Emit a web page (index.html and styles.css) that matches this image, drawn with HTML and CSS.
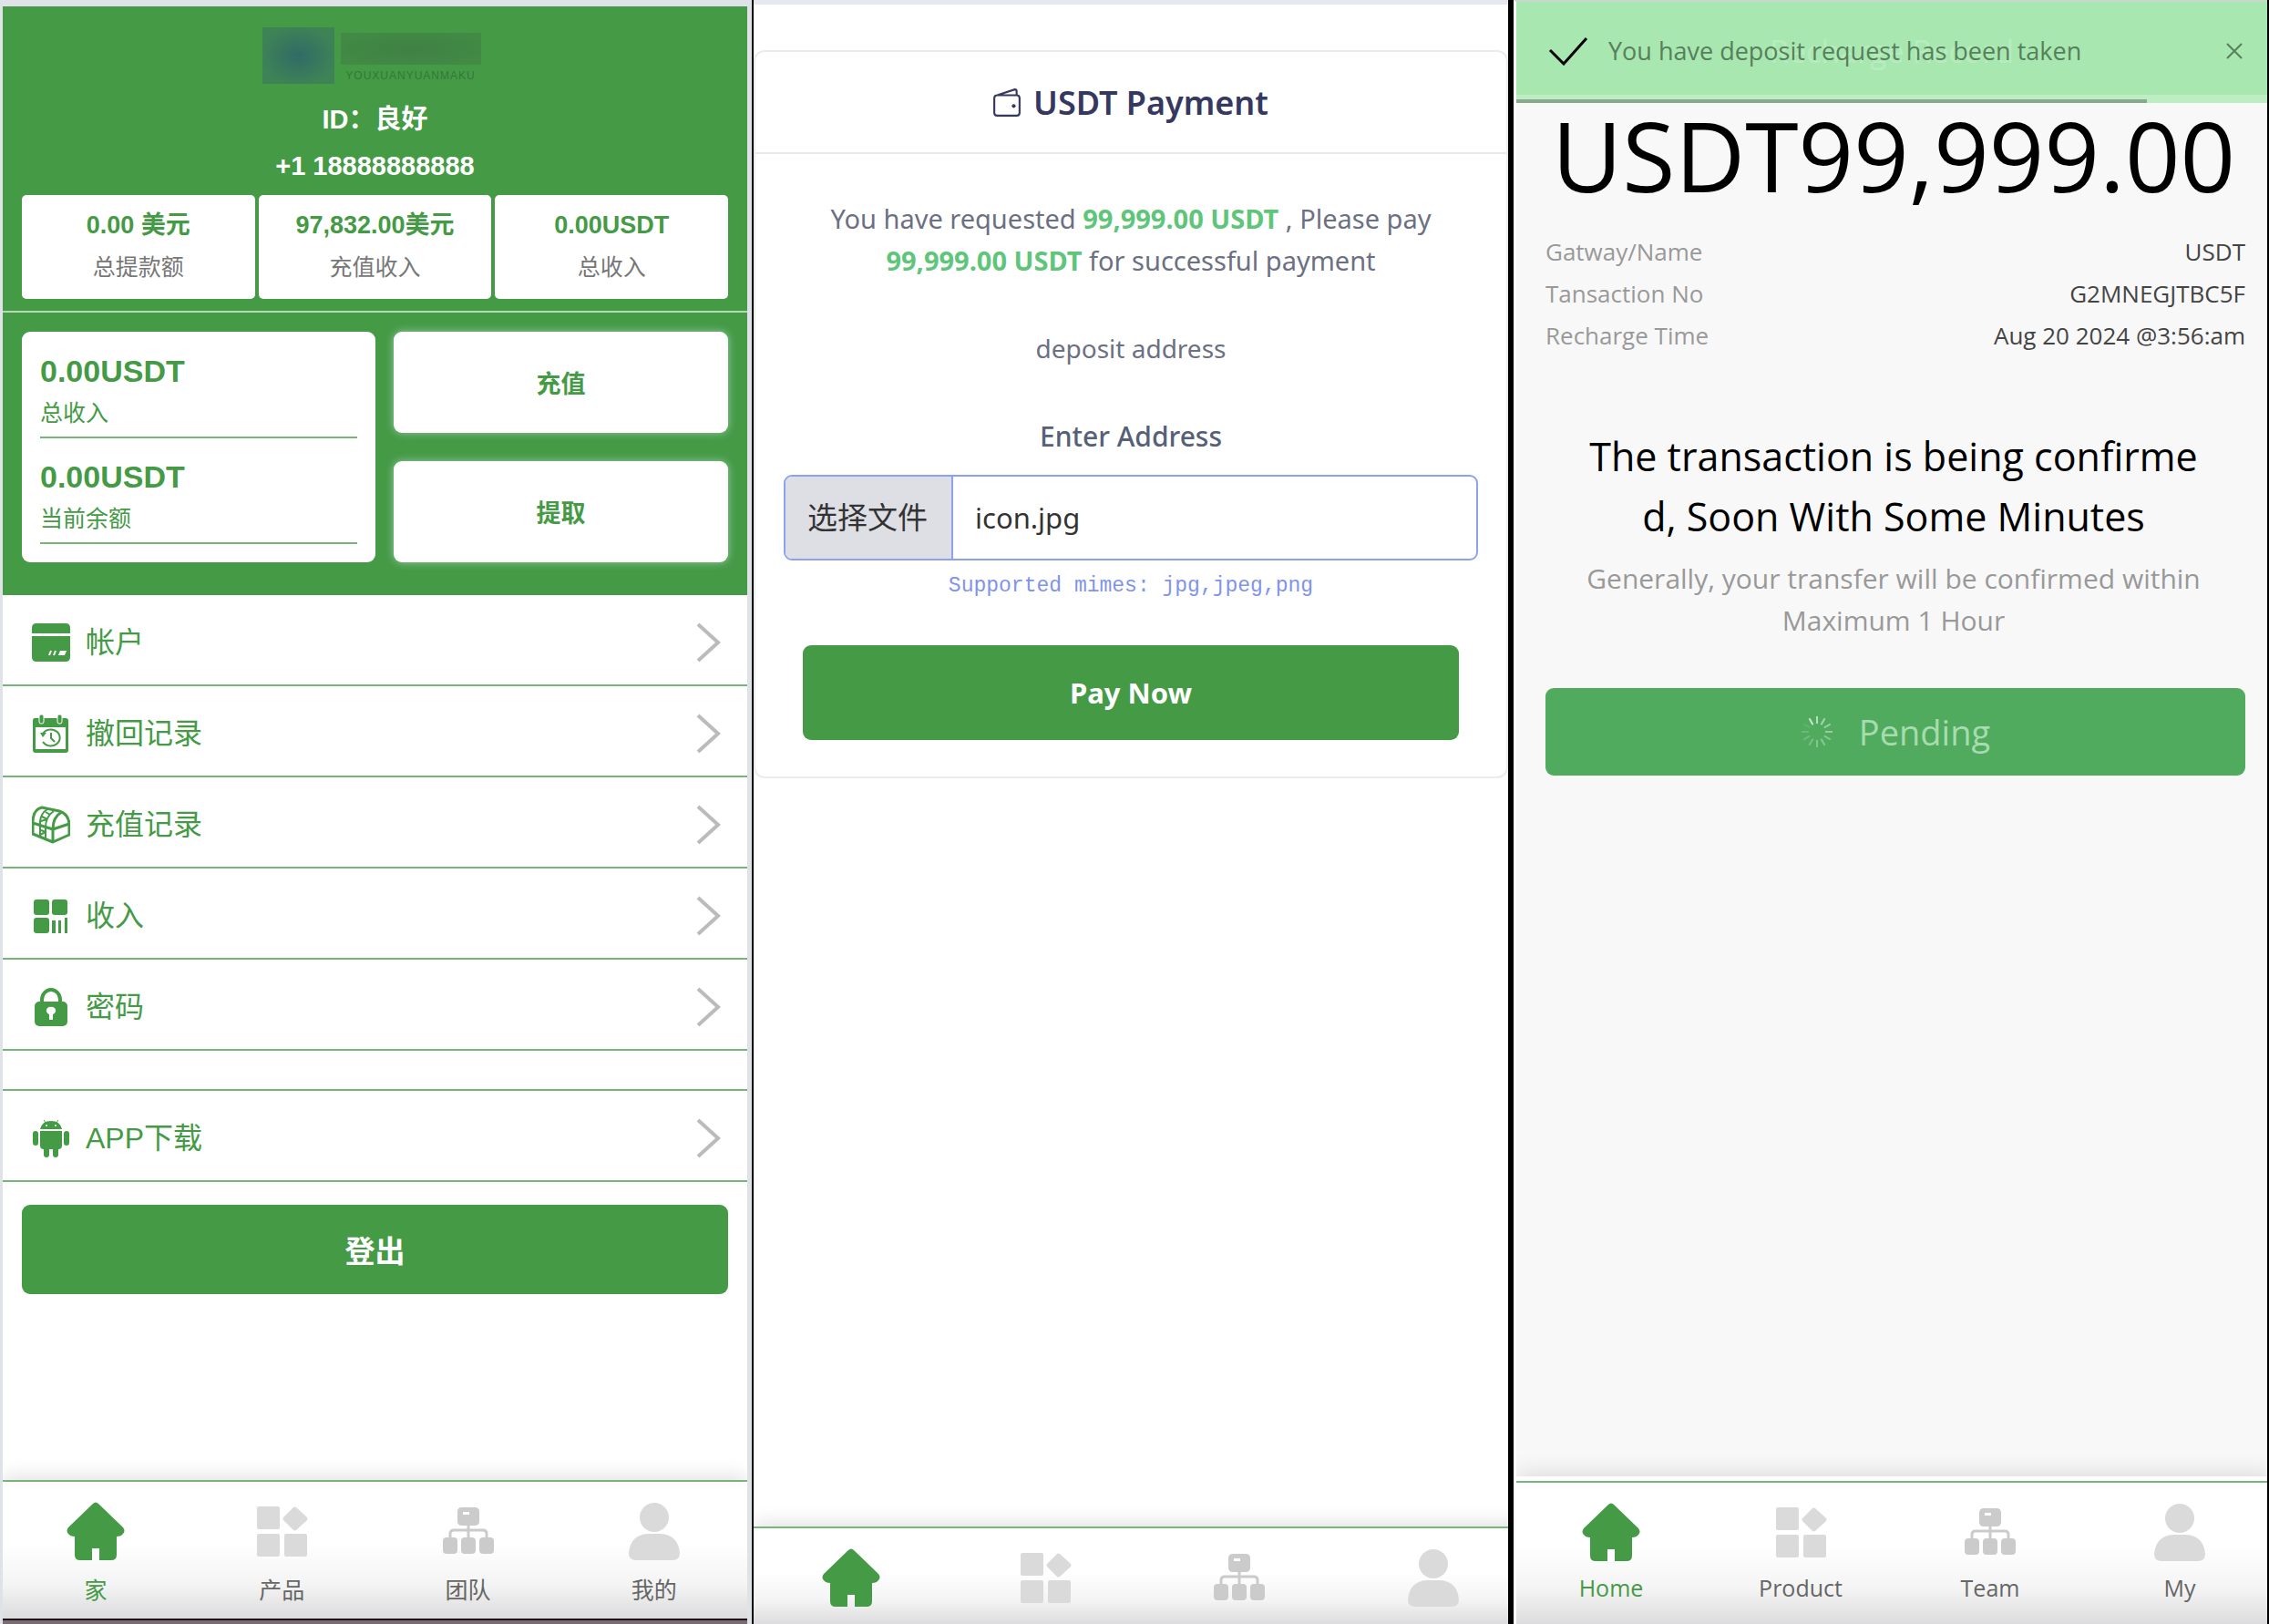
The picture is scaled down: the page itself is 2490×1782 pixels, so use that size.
FILE: index.html
```html
<!DOCTYPE html>
<html lang="zh">
<head>
  <meta charset="UTF-8">
  <meta name="viewport" content="width=device-width, initial-scale=1.0">
  <title>USDT Payment</title>
  <link rel="stylesheet" href="styles.css">
</head>
<body>
  <!-- shared icons -->
  <svg class="sprite" width="0" height="0" aria-hidden="true">
    <symbol id="i-home" viewBox="0 0 64 64">
      <path d="M29 2q3-3 6 0l27 26q3 4 0 7-2 3-7 3v20q0 6-6 6H36V51h-8v13H15q-6 0-6-6V38q-5 0-7-3-3-3 0-7z"/>
    </symbol>
    <symbol id="i-product" viewBox="0 0 64 64">
      <rect x="5" y="5" width="25" height="25" rx="2"/>
      <rect x="5" y="35" width="25" height="25" rx="2"/>
      <rect x="35" y="35" width="25" height="25" rx="2"/>
      <path d="M44.500 6.500q2-2 4 0l11 10q2 2 0 4l-11 10q-2 2-4 0l-10-10q-2-2 0-4z"/>
    </symbol>
    <symbol id="i-team" viewBox="0 0 64 64">
      <path d="M25 6h14q5 0 5 5v10q0 5-5 5H25q-5 0-5-5V11q0-5 5-5zm1 5v3h7v-3z" fill-rule="evenodd"/>
      <path d="M32 26v14M12 40v-5q0-4 4-4h32q4 0 4 4v5" fill="none" stroke="currentColor" stroke-width="3"/>
      <rect x="4" y="39" width="16" height="18" rx="4"/>
      <rect x="24" y="39" width="16" height="18" rx="4"/>
      <rect x="44" y="39" width="16" height="18" rx="4"/>
    </symbol>
    <symbol id="i-my" viewBox="0 0 64 64">
      <circle cx="32" cy="17" r="16"/>
      <path d="M4 56q2-20 21-21h14q19 1 21 21 0 8-8 8H12q-8 0-8-8z"/>
    </symbol>
    <symbol id="i-next" viewBox="0 0 28 44">
      <path d="M3 2l22 20L3 42" fill="none" stroke="#bbb" stroke-width="4"/>
    </symbol>
  </svg>

  <!-- account -->
  <section class="screen account">
    <header class="top">
      <div class="logo">
        <span class="logo-mark"></span>
        <div>
          <span class="logo-name"></span>
          <small>YOUXUANYUANMAKU</small>
        </div>
      </div>
      <p class="user">ID：良好</p>
      <p class="user">+1 18888888888</p>
      <div class="stats">
        <div class="stat"><b>0.00 美元</b><span>总提款额</span></div>
        <div class="stat"><b>97,832.00美元</b><span>充值收入</span></div>
        <div class="stat"><b>0.00USDT</b><span>总收入</span></div>
      </div>
    </header>
    <div class="wallet">
      <div class="balance">
        <div class="sum"><b>0.00USDT</b><span>总收入</span></div>
        <div class="sum"><b>0.00USDT</b><span>当前余额</span></div>
      </div>
      <div class="actions">
        <button type="button">充值</button>
        <button type="button">提取</button>
      </div>
    </div>
    <div class="menu">
      <a href="#">
        <svg class="icon" viewBox="0 0 42 42"><path d="M5 0h32q5 0 5 5v6H0V5q0-5 5-5zM0 14h42v23q0 5-5 5H5q-5 0-5-5z"/><path d="M21 30l-2 5M26 30l-2 5" stroke="#fff" stroke-width="2"/><path d="M31 30h7l-2 5h-7z" fill="#fff"/></svg>
        <span>帐户</span><svg class="next"><use href="#i-next"/></svg>
      </a>
      <a href="#">
        <svg class="icon" viewBox="0 0 42 42"><path d="M3 4h34q3 0 3 3v32q0 3-3 3H4q-3 0-3-3V7q0-3 2-3zm1 10v24h33V14z" fill-rule="evenodd"/><rect x="8" y="0" width="5" height="10" rx="2" stroke="#fff"/><rect x="28" y="0" width="5" height="10" rx="2" stroke="#fff"/><path d="M12 21a10 9 0 1 1 0 9M21 20v6l4 4" fill="none" stroke="currentColor" stroke-width="2"/><path d="M9 20h7l-4 5z"/></svg>
        <span>撤回记录</span><svg class="next"><use href="#i-next"/></svg>
      </a>
      <a href="#">
        <svg class="icon" viewBox="0 0 42 42"><g fill="none" stroke="currentColor" stroke-width="2" stroke-linejoin="round"><path d="M1 19Q1 4 11 2l19 4q10 3 11 14v12l-18 8L1 31zM1 19l22 7 18-6M23 26v14M23 26q0-14 10-19" stroke-width="3"/><path d="M9 22V17Q10 8 17 4M15 24q0-12 9-18M9 22v11M15 24v12M10 27l5 2M9 32l6-3M11 12l6 3M15 7l5 3M10 17l7-2"/></g></svg>
        <span>充值记录</span><svg class="next"><use href="#i-next"/></svg>
      </a>
      <a href="#">
        <svg class="icon" viewBox="0 0 42 42"><rect x="2" y="3" width="17" height="17" rx="3"/><rect x="22" y="3" width="17" height="17" rx="3"/><rect x="2" y="23" width="17" height="17" rx="3"/><path d="M22 26h4v14h-4zM29 26h3v14h-3zM36 23h3v17h-3z"/></svg>
        <span>收入</span><svg class="next"><use href="#i-next"/></svg>
      </a>
      <a href="#">
        <svg class="icon" viewBox="0 0 42 42"><path d="M11 18v-5a10 11 0 0 1 20 0v5" fill="none" stroke="currentColor" stroke-width="4"/><rect x="3" y="15" width="36" height="27" rx="5"/><path d="M21 21a4 4 0 0 1 2 8v6h-4v-6a4 4 0 0 1 2-8z" fill="#fff"/></svg>
        <span>密码</span><svg class="next"><use href="#i-next"/></svg>
      </a>
    </div>
    <div class="menu download">
      <a href="#">
        <svg class="icon" viewBox="0 0 42 42"><path d="M9 11q2-9 12-9t12 9zM9 13h24v16q0 4-4 4v6q0 3-3 3t-3-3v-6h-4v6q0 3-3 3t-3-3v-6q-4 0-4-4z"/><path d="M13 1l3 4M29 1l-3 4" stroke="currentColor"/><rect x="1" y="13" width="6" height="16" rx="3"/><rect x="35" y="13" width="6" height="16" rx="3"/><circle cx="16" cy="7" r="1" fill="#fff"/><circle cx="26" cy="7" r="1" fill="#fff"/></svg>
        <span>APP下载</span><svg class="next"><use href="#i-next"/></svg>
      </a>
    </div>
    <button type="button" class="logout">登出</button>
    <nav class="tabs">
      <a href="#" class="on"><svg><use href="#i-home"/></svg>家</a>
      <a href="#"><svg><use href="#i-product"/></svg>产品</a>
      <a href="#"><svg class="dark"><use href="#i-team"/></svg>团队</a>
      <a href="#"><svg><use href="#i-my"/></svg>我的</a>
    </nav>
    <div class="edge"></div>
  </section>

  <!-- payment -->
  <section class="screen payment">
    <form class="card">
      <h1>
        <svg viewBox="0 0 28 30"><path d="M4 8h20q3 0 3 3v15q0 3-3 3H4q-3 0-3-3V11q0-3 3-3l18-6q2 0 2 2v4" fill="none" stroke="currentColor" stroke-width="2"/><circle cx="21" cy="19" r="2"/></svg>
        USDT Payment
      </h1>
      <div class="card-body">
        <p class="request">You have requested <b>99,999.00 USDT</b> , Please pay<br><b>99,999.00 USDT</b> for successful payment</p>
        <p class="deposit">deposit address</p>
        <label class="caption" for="proof">Enter Address</label>
        <label class="file">
          <input type="file" id="proof">
          <span class="choose">选择文件</span>
          <span class="name">icon.jpg</span>
        </label>
        <code>Supported mimes: jpg,jpeg,png</code>
        <button type="button" class="pay">Pay Now</button>
      </div>
    </form>
    <nav class="tabs">
      <a href="#" class="on"><svg><use href="#i-home"/></svg></a>
      <a href="#"><svg><use href="#i-product"/></svg></a>
      <a href="#"><svg class="dark"><use href="#i-team"/></svg></a>
      <a href="#"><svg><use href="#i-my"/></svg></a>
    </nav>
  </section>

  <!-- record -->
  <section class="screen record">
    <div class="toast">
      <span class="page-title">Recharge Record</span>
      <svg class="check" viewBox="0 0 44 32"><path d="M2 15l15 15L42 2" fill="none" stroke="#000" stroke-width="3"/></svg>
      <span class="msg">You have deposit request has been taken</span>
      <button type="button" aria-label="Close"><svg viewBox="0 0 18 18"><path d="M1 1l16 16M17 1L1 17" stroke="#55805b" stroke-width="2"/></svg></button>
      <i class="progress"></i>
    </div>
    <div class="amount">USDT99,999.00</div>
    <dl>
      <div><dt>Gatway/Name</dt><dd>USDT</dd></div>
      <div><dt>Tansaction No</dt><dd>G2MNEGJTBC5F</dd></div>
      <div><dt>Recharge Time</dt><dd>Aug 20 2024 @3:56:am</dd></div>
    </dl>
    <h2>The transaction is being confirme<br>d, Soon With Some Minutes</h2>
    <p class="hint">Generally, your transfer will be confirmed within<br>Maximum 1 Hour</p>
    <button type="button" class="pending">
      <svg viewBox="-18 -18 36 36" stroke="#fff" stroke-width="2">
        <path d="M0-9v-8" opacity=".6"/><path d="M0-9v-8" opacity=".5" transform="rotate(30)"/><path d="M0-9v-8" opacity=".45" transform="rotate(60)"/><path d="M0-9v-8" opacity=".4" transform="rotate(90)"/><path d="M0-9v-8" opacity=".35" transform="rotate(120)"/><path d="M0-9v-8" opacity=".35" transform="rotate(150)"/><path d="M0-9v-8" opacity=".3" transform="rotate(180)"/><path d="M0-9v-8" opacity=".25" transform="rotate(210)"/><path d="M0-9v-8" opacity=".2" transform="rotate(240)"/><path d="M0-9v-8" opacity=".15" transform="rotate(270)"/><path d="M0-9v-8" opacity=".1" transform="rotate(300)"/><path d="M0-9v-8" opacity=".7" transform="rotate(330)"/>
      </svg>
      Pending
    </button>
    <nav class="tabs">
      <a href="#" class="on"><svg><use href="#i-home"/></svg>Home</a>
      <a href="#"><svg><use href="#i-product"/></svg>Product</a>
      <a href="#"><svg class="dark"><use href="#i-team"/></svg>Team</a>
      <a href="#"><svg><use href="#i-my"/></svg>My</a>
    </nav>
  </section>
</body>
</html>
```
FILE: styles.css
```css
* {
  box-sizing: border-box;
}
body {
  margin: 0;
  min-height: 100vh;
  display: grid;
  grid-template-columns: 827fr 834fr 829fr;
  background: #000;
  font-family: "Liberation Sans", "Noto Sans CJK SC", sans-serif;
}
.sprite {
  position: absolute;
}
p, h1, h2, dl, dd {
  margin: 0;
}
a {
  color: inherit;
  text-decoration: none;
}
button {
  border: none;
  font-family: inherit;
  cursor: pointer;
}
svg {
  fill: currentColor;
}
.screen {
  display: flex;
  flex-direction: column;
  min-width: 0;
  overflow: hidden;
  background: #fff;
}

/* tab bar */
.tabs {
  display: flex;
  margin-top: auto;
  border-top: 2px solid #78b57a;
  background: linear-gradient(#fff 45%, #f4f4f4 75%, #dcdcde);
  box-shadow: 0 -4px 20px rgba(0, 0, 0, 0.12);
}
.tabs a {
  flex: 1;
  display: flex;
  flex-direction: column;
  align-items: center;
  padding-top: 22px;
  font-size: 25px;
  line-height: 32px;
  color: #666;
}
.tabs svg {
  width: 64px;
  height: 64px;
  margin-bottom: 17px;
  color: #dadada;
}
.tabs svg.dark {
  color: #cbcbcb;
}
.tabs .on, .tabs .on svg {
  color: #459a46;
}

/* account */
.account {
  margin-right: 2px;
  border: solid #dfe3e8;
  border-width: 7px 5px 0 3px;
  color: #459a46;
}
.top {
  background: #459a46;
  border-bottom: 2px solid #b5d8b6;
  padding: 23px 21px 13px;
  text-align: center;
}
.logo {
  display: flex;
  justify-content: center;
  gap: 7px;
  height: 62px;
  margin: 0 8px 14px 0;
}
.logo-mark {
  width: 79px;
  background: radial-gradient(#316b66, #3e8356 75%);
}
.logo-name {
  display: block;
  width: 154px;
  height: 35px;
  margin-top: 6px;
  background: radial-gradient(#3f8144, #438c45);
}
.logo small {
  display: block;
  margin-top: 5px;
  font-size: 12px;
  letter-spacing: 1px;
  color: #34783a;
}
.user {
  font-size: 29px;
  font-weight: bold;
  line-height: 51px;
  color: #fff;
}
.stats {
  display: grid;
  grid-template-columns: repeat(3, 1fr);
  gap: 4px;
  margin-top: 6px;
}
.stat {
  background: #fff;
  border-radius: 5px;
  padding: 10px 0 11px;
}
.stat b {
  display: block;
  font-size: 27px;
  line-height: 46px;
}
.stat span {
  display: block;
  font-size: 25px;
  line-height: 47px;
  color: #777;
}
.wallet {
  display: grid;
  grid-template-columns: 388fr 367fr;
  gap: 20px;
  padding: 21px 21px 36px;
  background: #459a46;
}
.balance {
  background: #fff;
  border-radius: 9px;
  padding: 20px 20px 0;
}
.sum {
  height: 97px;
  border-bottom: 2px solid #78b57a;
  margin-bottom: 19px;
}
.sum b {
  display: block;
  font-size: 34px;
  line-height: 46px;
}
.sum span {
  font-size: 25px;
  line-height: 46px;
}
.actions {
  display: grid;
  gap: 31px;
}
.actions button {
  height: 111px;
  border-radius: 9px;
  background: #fff;
  box-shadow: 0 0 10px rgba(200, 235, 225, 0.6);
  color: #459a46;
  font-size: 27px;
  font-weight: bold;
}
.menu a {
  display: flex;
  align-items: center;
  height: 100px;
  padding: 6px 29px 0 32px;
  border-bottom: 2px solid #78b57a;
  font-size: 32px;
  line-height: 44px;
}
.menu span {
  flex: 1;
  padding-left: 17px;
}
.icon {
  width: 42px;
  height: 42px;
}
.next {
  width: 28px;
  height: 44px;
}
.download {
  margin-top: 42px;
  border-top: 2px solid #78b57a;
}
.logout {
  margin: 25px 21px;
  height: 98px;
  border-radius: 9px;
  background: #459a46;
  color: #fff;
  font-size: 33px;
  font-weight: bold;
}
.account .tabs a {
  height: 150px;
}
.edge {
  height: 6px;
  background: #7a6c73;
  border-top: 2px solid #1d1418;
}

/* payment */
.payment {
  margin-right: 6px;
  border-top: 5px solid #e6e8ef;
  font-family: "Noto Sans", "Noto Sans CJK SC", sans-serif;
}
.card {
  margin-top: 50px;
  border: 2px solid #ebebee;
  border-radius: 12px;
  text-align: center;
}
.card h1 {
  display: flex;
  align-items: center;
  justify-content: center;
  gap: 14px;
  height: 112px;
  border-bottom: 2px solid #e9e9ec;
  font-size: 36px;
  font-weight: 600;
  color: #36395f;
}
.card h1 svg {
  width: 30px;
  height: 32px;
}
.card-body {
  display: flex;
  flex-direction: column;
  padding: 48px 31px 40px;
  font-size: 28px;
  line-height: 46px;
  color: #6c7083;
}
.request {
  font-size: 29px;
}
.request b {
  color: #5fc57b;
  font-weight: 700;
}
.deposit {
  margin-top: 50px;
}
.caption {
  margin-top: 51px;
  font-size: 30px;
  font-weight: 500;
  color: #566078;
}
.file {
  display: flex;
  align-items: stretch;
  margin-top: 19px;
  height: 94px;
  border: 2px solid #8ea0f0;
  border-radius: 9px;
  overflow: hidden;
  font-size: 31px;
  line-height: 90px;
  color: #333;
}
.file input {
  position: absolute;
  opacity: 0;
}
.choose {
  padding: 0 26px 0 24px;
  border-right: 2px solid #8ea0f0;
  background: #dedfe5;
  font-size: 33px;
}
.name {
  padding-left: 24px;
}
.card-body code {
  margin-top: 5px;
  font-family: "Liberation Mono", monospace;
  font-size: 23px;
  color: #7f93ee;
}
.pay {
  margin: 42px 21px 0;
  height: 104px;
  border-radius: 9px;
  background: #459a46;
  color: #fff;
  font-size: 31px;
  font-weight: 700;
}
.payment .tabs {
  height: 107px;
  margin-right: -24px;
}
.payment .tabs svg {
  margin-bottom: 0;
}

/* record */
.record {
  position: relative;
  margin-right: 2px;
  border-top: 2px solid #c9d6cb;
  border-left: 3px solid #fff;
  background: #f8f8f8;
  font-family: "Open Sans", sans-serif;
}
.toast {
  position: relative;
  display: flex;
  align-items: center;
  height: 111px;
  padding: 0 27px 4px 35px;
  background: linear-gradient(#a9e7b1 102px, #bdeec2 102px);
}
.page-title {
  position: absolute;
  left: 0;
  right: 0;
  text-align: center;
  font-size: 34px;
  color: #b7ecbe;
}
.check {
  width: 44px;
  height: 32px;
}
.msg {
  position: relative;
  flex: 1;
  padding-left: 22px;
  font-size: 27px;
  color: #55805b;
}
.toast button {
  padding: 0;
  background: none;
}
.toast button svg {
  display: block;
  width: 18px;
  height: 18px;
}
.progress {
  position: absolute;
  left: 0;
  bottom: 0;
  width: 84%;
  height: 4px;
  background: #88a990;
}
.amount {
  padding-left: 4px;
  text-align: center;
  font-size: 106px;
  line-height: 114px;
}
.record dl {
  margin-top: 26px;
  padding: 0 24px 0 32px;
  font-size: 26px;
  line-height: 46px;
}
.record dl div {
  display: flex;
  justify-content: space-between;
}
.record dt {
  color: #999;
}
.record dd {
  color: #444;
}
.record h2 {
  margin-top: 77px;
  padding-left: 4px;
  text-align: center;
  font-size: 43px;
  font-weight: normal;
  line-height: 66px;
}
.hint {
  margin-top: 12px;
  padding-left: 4px;
  text-align: center;
  font-size: 30px;
  line-height: 46px;
  color: #999;
}
.pending {
  display: flex;
  align-items: center;
  justify-content: center;
  gap: 28px;
  height: 96px;
  margin: 51px 24px 0 32px;
  border-radius: 9px;
  background: #50ab5f;
  color: #a6dcae;
  font-size: 38px;
}
.pending svg {
  width: 36px;
  height: 36px;
}
.record .tabs {
  margin-right: -8px;
  box-shadow: 0 -5px #fff, 0 -8px 24px rgba(0, 0, 0, 0.12);
}
.record .tabs a {
  height: 155px;
}
.record .tabs svg {
  margin-bottom: 13px;
}
```
